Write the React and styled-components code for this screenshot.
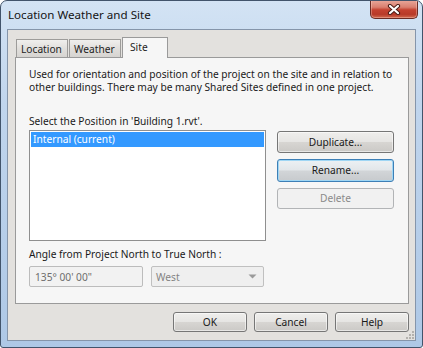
import styled, { createGlobalStyle, css } from "styled-components";

const GlobalStyle = createGlobalStyle`
  html, body {
    margin: 0;
    padding: 0;
    background: #ffffff;
  }
  body {
    font-family: "Noto Sans", "Open Sans", sans-serif;
    font-size: 10.2px;
    color: #1a1a1a;
  }
`;

const App = () => {
  return (
    <>
      <GlobalStyle />
      <Window>
        <TitleBar>
          <Title>Location Weather and Site</Title>
          <CloseButton>
            <svg width="14" height="11" viewBox="0 0 14 11">
              <path
                d="M3 2 L11 9 M11 2 L3 9"
                stroke="#4b1c16"
                strokeWidth="4.2"
                strokeLinecap="round"
              />
              <path
                d="M3 2 L11 9 M11 2 L3 9"
                stroke="#ffffff"
                strokeWidth="2.2"
                strokeLinecap="round"
              />
            </svg>
          </CloseButton>
        </TitleBar>
        <Client>
          <Tabs>
            <Tab>Location</Tab>
            <Tab>Weather</Tab>
            <Tab $active>Site</Tab>
          </Tabs>
          <TabPage>
            <Description>
              Used for orientation and position of the project on the site and
              in relation to other buildings. There may be many Shared Sites
              defined in one project.
            </Description>
            <Label $top={21}>Select the Position in 'Building 1.rvt'.</Label>
            <PositionRow>
              <ListBox>
                <ListItem $selected>Internal (current)</ListItem>
              </ListBox>
              <ButtonColumn>
                <Button $height={22}>Duplicate...</Button>
                <Button $height={23} $focused>
                  Rename...
                </Button>
                <Button $height={21} disabled>
                  Delete
                </Button>
              </ButtonColumn>
            </PositionRow>
            <Label $top={7}>Angle from Project North to True North :</Label>
            <AngleRow>
              <TextField type="text" value={"135° 00' 00\""} readOnly disabled />
              <Combo>
                West
                <svg width="9" height="5" viewBox="0 0 9 5">
                  <path d="M0.5 0.5 L8.5 0.5 L4.5 4.5 Z" fill="#9a9a9a" />
                </svg>
              </Combo>
            </AngleRow>
          </TabPage>
          <Footer>
            <Button $height={20} $width={74}>
              OK
            </Button>
            <Button $height={20} $width={74}>
              Cancel
            </Button>
            <Button $height={20} $width={74}>
              Help
            </Button>
          </Footer>
          <Grip>
            <svg width="8" height="8" viewBox="0 0 8 8">
              <g fill="#b3b1ad">
                <rect x="6" y="0" width="2" height="2" />
                <rect x="3" y="3" width="2" height="2" />
                <rect x="6" y="3" width="2" height="2" />
                <rect x="0" y="6" width="2" height="2" />
                <rect x="3" y="6" width="2" height="2" />
                <rect x="6" y="6" width="2" height="2" />
              </g>
            </svg>
          </Grip>
        </Client>
      </Window>
    </>
  );
};

export default App;

const Window = styled.div`
  box-sizing: border-box;
  width: 423px;
  height: 348px;
  display: flex;
  flex-direction: column;
  padding: 0 6px 6px 6px;
  border: 1px solid #42546b;
  border-radius: 7px 7px 3px 3px;
  background: linear-gradient(180deg, #d3e3f4 0%, #c0d5ed 30%, #aec8e6 100%);
  overflow: hidden;
`;

const TitleBar = styled.div`
  display: flex;
  justify-content: space-between;
  align-items: center;
  height: 28px;
  flex-shrink: 0;
`;

const Title = styled.span`
  padding-left: 1px;
  padding-bottom: 1px;
  font-size: 11.6px;
  color: #141414;
`;

const CloseButton = styled.div`
  align-self: flex-start;
  box-sizing: border-box;
  display: flex;
  align-items: center;
  justify-content: center;
  width: 48px;
  height: 19px;
  margin-top: -1px;
  margin-right: -2px;
  border: 1px solid #6a2b24;
  border-top: none;
  border-radius: 0 0 5px 5px;
  background: linear-gradient(
    180deg,
    #e9a99c 0%,
    #d97f6f 40%,
    #c4412f 55%,
    #b83a29 80%,
    #d36a4f 100%
  );
  box-shadow: inset 0 0 0 1px rgba(255, 220, 210, 0.35);
`;

const Client = styled.div`
  position: relative;
  flex: 1;
  display: flex;
  flex-direction: column;
  padding: 7px 6px 8px 7px;
  border: 1px solid #8595aa;
  background: #e3e1de;
`;

const Tabs = styled.div`
  display: flex;
  align-items: flex-end;
  height: 20px;
  padding-left: 1px;
`;

const Tab = styled.div`
  box-sizing: border-box;
  display: flex;
  align-items: center;
  width: 52px;
  height: 18px;
  margin-right: 1px;
  padding: 1px 0 0 4px;
  border: 1px solid #9d9c9a;
  border-bottom: none;
  background: linear-gradient(180deg, #f0efed 0%, #e1dfdc 50%, #d6d4d1 100%);
  color: #1e1e1e;

  ${(p) =>
    p.$active &&
    css`
      position: relative;
      z-index: 1;
      width: 46px;
      height: 21px;
      margin-bottom: -1px;
      padding: 0 0 3px 7px;
      background: #f6f6f6;
      border-color: #9a9a9a;
    `}
`;

const TabPage = styled.div`
  box-sizing: border-box;
  height: 247px;
  display: flex;
  flex-direction: column;
  padding: 10px 0 0 13px;
  border: 1px solid #9a9a9a;
  background: #f6f6f6;
`;

const Description = styled.p`
  margin: 0;
  line-height: 13px;
  width: 372px;
`;

const Label = styled.div`
  margin-top: ${(p) => p.$top}px;
  line-height: 13px;
`;

const PositionRow = styled.div`
  display: flex;
  gap: 11px;
  margin-top: 2px;
`;

const ListBox = styled.div`
  box-sizing: border-box;
  width: 237px;
  height: 111px;
  padding: 1px;
  border: 1px solid #8f8f8f;
  background: #ffffff;
`;

const ListItem = styled.div`
  height: 15px;
  line-height: 15px;
  padding-left: 2px;
  background: ${(p) => (p.$selected ? "#3399ff" : "transparent")};
  color: ${(p) => (p.$selected ? "#ffffff" : "#1e1e1e")};
`;

const ButtonColumn = styled.div`
  display: flex;
  flex-direction: column;
  gap: 6px;
  width: 117px;
  padding-top: 1px;
`;

const Button = styled.button`
  box-sizing: border-box;
  width: ${(p) => (p.$width ? `${p.$width}px` : "100%")};
  height: ${(p) => p.$height}px;
  padding: 0 0 1px 0;
  font: inherit;
  color: #1a1a1a;
  border: 1px solid #767676;
  border-radius: 3px;
  background: linear-gradient(
    180deg,
    #efeeec 0%,
    #e6e5e3 48%,
    #d7d5d2 52%,
    #cbc9c6 100%
  );
  box-shadow: inset 0 0 0 1px rgba(255, 255, 255, 0.55);

  ${(p) =>
    p.$focused &&
    css`
      border-color: #3d7fb6;
      box-shadow: inset 0 0 0 1px #9fd6f4;
      background: linear-gradient(
        180deg,
        #ecf1f4 0%,
        #e2e6e9 48%,
        #d2d5d8 52%,
        #c7cacd 100%
      );
    `}

  &:disabled {
    border-color: #b2b4b6;
    background: #f1f1f1;
    color: #8a8a8a;
    box-shadow: none;
  }
`;

const AngleRow = styled.div`
  display: flex;
  gap: 8px;
  margin-top: 5px;
`;

const TextField = styled.input`
  box-sizing: border-box;
  width: 114px;
  height: 21px;
  padding: 0 0 0 5px;
  font: inherit;
  color: #6e6e6e;
  border: 1px solid #bcbcbc;
  border-radius: 2px;
  background: #f2f2f2;
  outline: none;
`;

const Combo = styled.div`
  box-sizing: border-box;
  display: flex;
  align-items: center;
  justify-content: space-between;
  width: 113px;
  height: 21px;
  padding: 0 6px 0 4px;
  color: #838383;
  border: 1px solid #c0c0c0;
  border-radius: 2px;
  background: #efefef;
`;

const Footer = styled.div`
  display: flex;
  justify-content: flex-end;
  gap: 7px;
  margin-top: 8px;
`;

const Grip = styled.div`
  position: absolute;
  right: 1px;
  bottom: 1px;
  display: flex;
`;
